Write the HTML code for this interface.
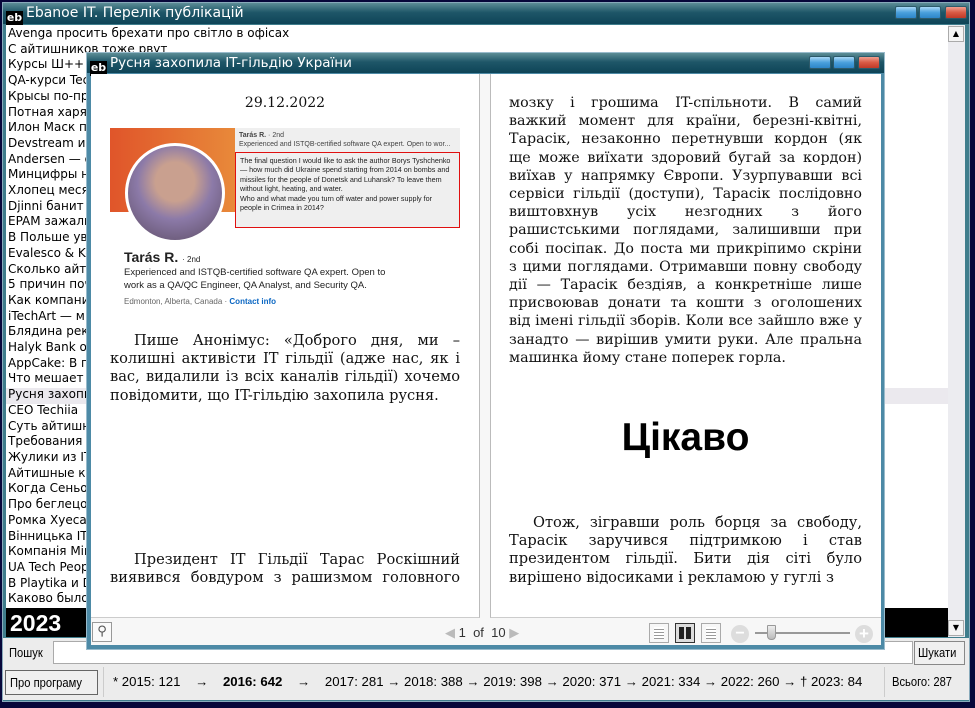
<!DOCTYPE html>
<html><head><meta charset="utf-8">
<style>
*{margin:0;padding:0;box-sizing:border-box}
body{width:975px;height:708px;background:#07073a;position:relative;overflow:hidden;font-family:"DejaVu Sans","Liberation Sans",sans-serif}
.abs{position:absolute}
.tb{background:linear-gradient(#5c8d96,#1e5668 45%,#0e4457);}
.tt{color:#fff;font-size:14px;font-family:"DejaVu Sans",sans-serif;white-space:nowrap}
.eb{background:#000;color:#fff;font-size:11px;font-weight:bold;width:17px;height:15px;line-height:14px;text-align:center;display:inline-block}
.btn{position:absolute;height:13px;border:1px solid #2d5a6a;border-radius:2px}
.bl{background:linear-gradient(#a9d8f6,#4aa0dc 50%,#2d86c8);width:22px}
.rd{background:linear-gradient(#f0a090,#d85a45 50%,#c03a28);width:22px}
.list{font-size:12px;line-height:15.7px;color:#000;white-space:nowrap}
.pg{font-family:"DejaVu Serif","Liberation Serif",serif;font-size:14.6px;line-height:18.2px;color:#111;text-align:justify}
.pg p{margin:0}
.cond{font-family:'Liberation Sans',sans-serif;font-size:13px;transform:scaleX(0.86);transform-origin:0 0;white-space:nowrap}
</style></head><body>
<div class="abs" style="left:2px;top:2px;width:968px;height:700px;background:#3f7d8c;border:1px solid #8ab"></div>
<div class="abs tb" style="left:3px;top:3px;width:966px;height:21px"></div>
<div class="abs" style="left:6px;top:6px"><span class="eb">eb</span></div>
<div class="abs tt" style="left:26px;top:5px">Ebanoe IT. Перелік публікацій</div>
<div class="btn bl" style="left:895px;top:6px"></div>
<div class="btn bl" style="left:919px;top:6px"></div>
<div class="btn rd" style="left:945px;top:6px"></div>
<div class="abs" style="left:6px;top:25px;width:959px;height:612px;background:#fff"></div>
<div class="abs" style="left:6px;top:388px;width:942px;height:16px;background:#ebe9ee"></div>
<div class="abs list" style="left:8px;top:26px">Avenga просить брехати про світло в офісах<br>С айтишников тоже рвут<br>Курсы Ш++<br>QA-курси Tec<br>Крысы по-пр<br>Потная харя<br>Илон Маск пр<br>Devstream и<br>Andersen — о<br>Минцифры н<br>Хлопец меся<br>Djinni банит<br>EPAM зажали<br>В Польше ув<br>Evalesco &amp; Ke<br>Сколько айти<br>5 причин поч<br>Как компании<br>iTechArt — м<br>Блядина рекл<br>Halyk Bank о<br>AppCake: В п<br>Что мешает<br>Русня захопи<br>CEO Techiia<br>Суть айтишн<br>Требования<br>Жулики из IT<br>Айтишные кр<br>Когда Сеньор<br>Про беглецо<br>Ромка Хуесан<br>Вінницька IT<br>Компанія Mir<br>UA Tech Peop<br>В Playtika и D<br>Каково было</div>
<div class="abs" style="left:948px;top:25px;width:17px;height:612px;background:#ececf0"></div>
<div class="abs" style="left:948px;top:26px;width:16px;height:16px;background:#f4f4f4;border:1px solid #aaa;font-size:8px;text-align:center;line-height:14px">▲</div>
<div class="abs" style="left:948px;top:620px;width:16px;height:16px;background:#f4f4f4;border:1px solid #aaa;font-size:8px;text-align:center;line-height:14px">▼</div>
<div class="abs" style="left:6px;top:608px;width:942px;height:29px;background:#000"></div>
<div class="abs" style="left:10px;top:610px;color:#fff;font:bold 23px 'Liberation Sans',sans-serif">2023</div>
<div class="abs" style="left:3px;top:638px;width:966px;height:62px;background:#ececec"></div>
<div class="abs cond" style="left:9px;top:645px">Пошук</div>
<div class="abs" style="left:53px;top:641px;width:860px;height:23px;background:#fff;border:1px solid #aaa"></div>
<div class="abs" style="left:914px;top:641px;width:51px;height:24px;background:#f0f0f0;border:1px solid #888;"></div>
<div class="abs cond" style="left:918px;top:645px">Шукати</div>
<div class="abs" style="left:5px;top:670px;width:93px;height:25px;background:#f0f0f0;border:1px solid #666"></div>
<div class="abs cond" style="left:10px;top:675px">Про програму</div>
<div class="abs" style="left:103px;top:667px;width:1px;height:30px;background:#ccc"></div>
<div class="abs cond" style="left:113px;top:674px;transform:none;font-size:13.2px">* 2015: 121 &nbsp;&nbsp;&nbsp;→ &nbsp;&nbsp;&nbsp;<b>2016: 642</b> &nbsp;&nbsp;&nbsp;→ &nbsp;&nbsp;&nbsp;2017: 281 → 2018: 388 → 2019: 398 → 2020: 371 → 2021: 334 → 2022: 260 → † 2023: 84</div>
<div class="abs" style="left:884px;top:667px;width:1px;height:30px;background:#ccc"></div>
<div class="abs cond" style="left:892px;top:674px">Всього: 287</div>
<div class="abs" style="left:86px;top:52px;width:799px;height:598px;background:#4d8aa6;border:1px solid #9bc"></div>
<div class="abs tb" style="left:87px;top:53px;width:797px;height:20px"></div>
<div class="abs" style="left:90px;top:56px"><span class="eb">eb</span></div>
<div class="abs tt" style="left:110px;top:55px;font-size:13.5px">Русня захопила IT-гільдію України</div>
<div class="btn bl" style="left:809px;top:56px"></div>
<div class="btn bl" style="left:833px;top:56px"></div>
<div class="btn rd" style="left:858px;top:56px"></div>
<div class="abs" style="left:91px;top:74px;width:790px;height:571px;background:#f7f7f7"></div>
<div class="abs" style="left:91px;top:74px;width:389px;height:544px;background:#fff;border-right:1px solid #bbb;border-bottom:1px solid #ccc"></div>
<div class="abs" style="left:490px;top:74px;width:391px;height:544px;background:#fff;border-left:1px solid #bbb;border-bottom:1px solid #ccc"></div>
<div class="abs pg" style="left:110px;top:94px;width:350px;text-align:center;font-size:14px">29.12.2022</div>
<div class="abs" style="left:110px;top:128px;width:125px;height:84px;background:linear-gradient(90deg,#e0552a,#e8893a)"></div>
<div class="abs" style="left:125px;top:143px;width:100px;height:100px;border-radius:50%;background:radial-gradient(circle at 50% 38%,#c9a08f 0 26%,#8c7aa8 50%,#5a4a60);border:3px solid #fff"></div>
<div class="abs" style="left:235px;top:128px;width:225px;height:24px;background:#efefef;font:7px 'Liberation Sans',sans-serif;color:#444;padding:3px 4px;line-height:9px"><b>Tarás R.</b> · 2nd<br>Experienced and ISTQB-certified software QA expert. Open to wor...</div>
<div class="abs" style="left:235px;top:152px;width:225px;height:76px;background:#efefef;border:1.5px solid #e01010;font:7.2px 'Liberation Sans',sans-serif;color:#222;padding:3px 4px;line-height:9.4px">The final question I would like to ask the author Borys Tyshchenko — how much did Ukraine spend starting from 2014 on bombs and missiles for the people of Donetsk and Luhansk? To leave them without light, heating, and water.<br>Who and what made you turn off water and power supply for people in Crimea in 2014?</div>
<div class="abs" style="left:124px;top:249px;font:bold 14px 'Liberation Sans',sans-serif;color:#222">Tarás R. <span style="font-weight:normal;font-size:8px">· 2nd</span></div>
<div class="abs" style="left:124px;top:267px;font:9.5px 'Liberation Sans',sans-serif;color:#222;line-height:12.5px">Experienced and ISTQB-certified software QA expert. Open to<br>work as a QA/QC Engineer, QA Analyst, and Security QA.</div>
<div class="abs" style="left:124px;top:297px;font:8px 'Liberation Sans',sans-serif;color:#666">Edmonton, Alberta, Canada · <b style="color:#0a66c2">Contact info</b></div>
<div class="abs pg" style="left:110px;top:332px;width:350px"><p style="text-indent:24px">Пише Анонімус: «Доброго дня, ми – колишні активісти IT гільдії (адже нас, як і вас, видалили із всіх каналів гільдії) хочемо повідомити, що IT-гільдію захопила русня.</p></div>
<div class="abs pg" style="left:110px;top:551px;width:350px;text-align-last:justify"><p style="text-indent:24px">Президент IT Гільдії Тарас Роскішний виявився бовдуром з рашизмом головного</p></div>
<div class="abs pg" style="left:509px;top:94px;width:353px;font-size:14.25px"><p>мозку і грошима IT-спільноти. В самий важкий момент для країни, березні-квітні, Тарасік, незаконно перетнувши кордон (як ще може виїхати здоровий бугай за кордон) виїхав у напрямку Європи. Узурпувавши всі сервіси гільдії (доступи), Тарасік послідовно виштовхнув усіх незгодних з його рашистськими поглядами, залишивши при собі посіпак. До поста ми прикріпимо скріни з цими поглядами. Отримавши повну свободу дії — Тарасік бездіяв, а конкретніше лише присвоював донати та кошти з оголошених від імені гільдії зборів. Коли все зайшло вже у занадто — вирішив умити руки. Але пральна машинка йому стане поперек горла.</p></div>
<div class="abs" style="left:490px;top:416px;width:391px;text-align:center;font:bold 39px 'Liberation Sans',sans-serif;color:#000">Цікаво</div>
<div class="abs pg" style="left:509px;top:514px;width:353px"><p style="text-indent:24px">Отож, зігравши роль борця за свободу, Тарасік заручився підтримкою і став президентом гільдії. Бити дія сіті було вирішено відосиками і рекламою у гуглі з</p></div>
<div class="abs" style="left:92px;top:622px;width:20px;height:20px;border:1px solid #999;background:#fafafa;font-size:13px;text-align:center;line-height:18px;color:#555">⚲</div>
<div class="abs" style="left:445px;top:625px;font:13px 'Liberation Sans',sans-serif;color:#333;white-space:nowrap"><span style="color:#bbb">◀</span> 1 &nbsp;of &nbsp;10 <span style="color:#bbb">▶</span></div>
<div class="abs" style="left:649px;top:623px;width:20px;height:20px;border:1px solid #aaa;background:repeating-linear-gradient(#fff 0 2px,#999 2px 3px);background-clip:content-box;padding:3px 4px"></div>
<div class="abs" style="left:675px;top:623px;width:20px;height:20px;border:1px solid #333;background:#ddd;padding:3px"><div style="height:100%;background:repeating-linear-gradient(90deg,#222 0 5px,#ddd 5px 7px)"></div></div>
<div class="abs" style="left:701px;top:623px;width:20px;height:20px;border:1px solid #aaa;background:repeating-linear-gradient(#fff 0 2px,#999 2px 3px);background-clip:content-box;padding:3px 4px"></div>
<div class="abs" style="left:731px;top:625px;width:18px;height:18px;border-radius:50%;background:#ddd;color:#fff;font:bold 16px 'Liberation Sans';text-align:center;line-height:17px">−</div>
<div class="abs" style="left:755px;top:632px;width:95px;height:2px;background:#999"></div>
<div class="abs" style="left:767px;top:625px;width:9px;height:15px;background:linear-gradient(#eee,#bbb);border:1px solid #999;border-radius:1px 1px 4px 4px"></div>
<div class="abs" style="left:855px;top:625px;width:18px;height:18px;border-radius:50%;background:#ddd;color:#fff;font:bold 17px 'Liberation Sans';text-align:center;line-height:18px">+</div>
</body></html>
